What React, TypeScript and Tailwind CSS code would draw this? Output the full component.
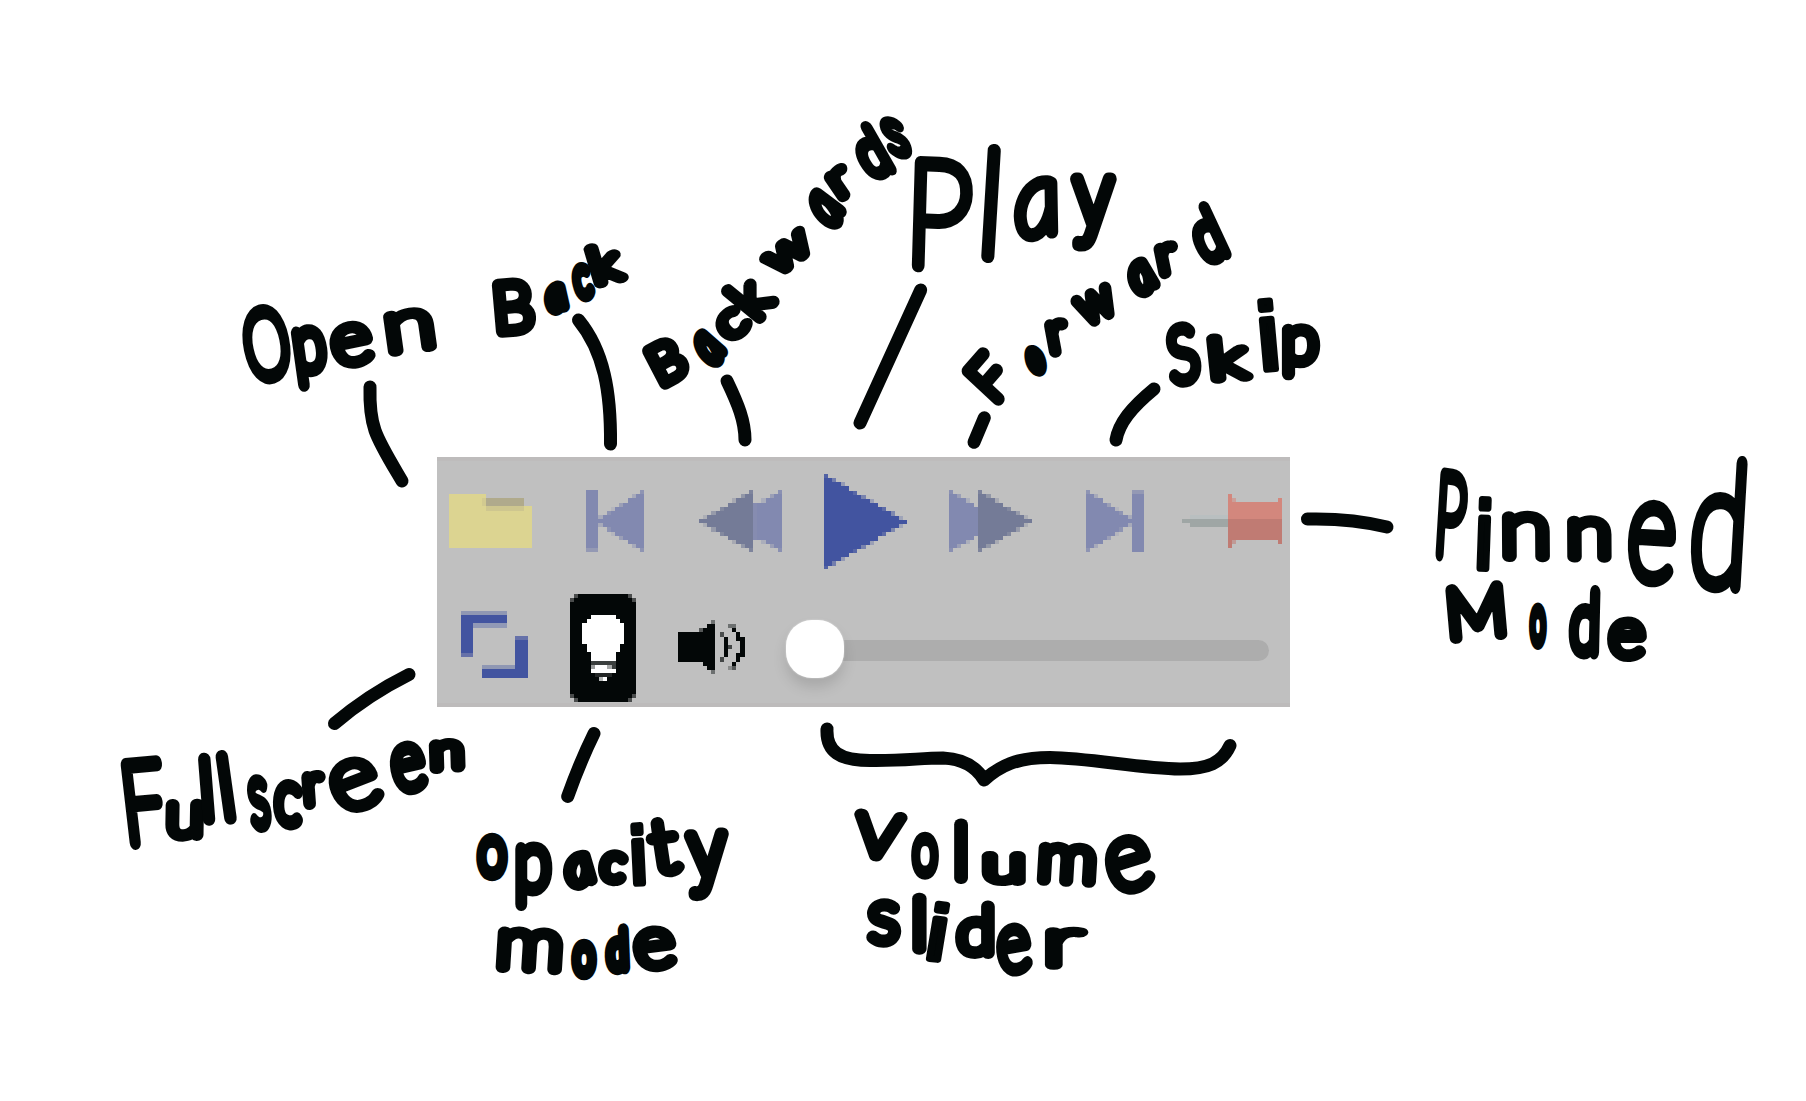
import React from "react";

/* ---------- pixel icons ---------- */

const U = 12.5 / 3; // one icon pixel on the page

type Cell = [x: number, y: number, w: number, h: number, fill: string];

function PixelIcon({ w, h, cells, label }: { w: number; h: number; cells: Cell[]; label: string }) {
  return (
    <svg
      role="img"
      aria-label={label}
      className="block shrink-0"
      width={w * U}
      height={h * U}
      viewBox={`0 0 ${w} ${h}`}
      shapeRendering="crispEdges"
    >
      {cells.map(([x, y, cw, ch, fill], i) => (
        <rect key={i} x={x} y={y} width={cw} height={ch} fill={fill} />
      ))}
    </svg>
  );
}

function mix(fill: string, amount: number) {
  const base = 192;
  const part = (i: number) => {
    const v = parseInt(fill.slice(i, i + 2), 16);
    return Math.round(base + (v - base) * amount);
  };
  return `rgb(${part(1)} ${part(3)} ${part(5)})`;
}

/** A stair-stepped triangle with its tip at x = tip and its flat side at x = base. */
function triangle(tip: number, base: number, top: number, bottom: number, fill: string): Cell[] {
  const cells: Cell[] = [];
  const mid = (top + bottom) / 2;
  const half = (bottom - top) / 2;
  const dir = base > tip ? 1 : -1;
  const len = Math.abs(base - tip);
  for (let y = top; y < bottom; y++) {
    const d = Math.abs(y + 0.5 - mid) / half;
    const edge = d * len;
    const whole = Math.ceil(edge);
    const frac = whole - edge;
    const x = dir === 1 ? tip + whole : base;
    if (len - whole > 0) cells.push([x, y, len - whole, 1, fill]);
    if (frac > 0.1) {
      const px = dir === 1 ? tip + whole - 1 : tip - whole;
      cells.push([px, y, 1, 1, mix(fill, frac)]);
    }
  }
  return cells;
}

const BLUE = "#4254a0";
const SOFT = "#8289b0";
const SLATE = "#747b97";
const INK = "#030707";

const folder: Cell[] = [
  [0, 0, 9, 13, "#dcd491"],
  [9, 3, 11, 10, "#dcd491"],
  [9, 1, 9, 2, "#b0aa8c"],
  [8, 1, 1, 2, "#d2ca90"],
  [9, 3, 9, 1, "#cec68f"],
];
const back: Cell[] = [[0, 0, 3, 15, SOFT], [0, 14, 3, 1, "#9499b4"], ...triangle(2, 14, 0, 15, SOFT)];
const rewind: Cell[] = [...triangle(7, 20, 0, 15, SOFT), ...triangle(0, 13, 0, 15, SLATE), [13, 3, 1, 9, "#868cb0"]];
const play = triangle(20, 0, 0, 23, BLUE);
const forward: Cell[] = [...triangle(13, 0, 0, 15, SOFT), ...triangle(20, 7, 0, 15, SLATE)];
const skip: Cell[] = [...triangle(12, 0, 0, 15, SOFT), [11, 0, 3, 15, SOFT], [11, 0, 3, 1, "#9499b4"]];
const pin: Cell[] = [
  [2, 5, 9, 1, "#b9bfc0"],
  [0, 6, 11, 1, "#9fa6a5"],
  [2, 7, 9, 1, "#9fa6a5"],
  [11, 0, 1, 6, "#d3877d"],
  [12, 1, 1, 5, "#d3877d"],
  [12, 1, 1, 1, "#cb9f99"],
  [13, 2, 10, 4, "#d3877d"],
  [23, 1, 1, 5, "#d3877d"],
  [11, 6, 1, 7, "#c07b73"],
  [12, 6, 1, 6, "#c07b73"],
  [12, 11, 1, 1, "#c09a96"],
  [13, 6, 10, 5, "#c07b73"],
  [23, 6, 1, 6, "#c07b73"],
];
const fullscreen: Cell[] = [
  [0, 0, 11, 1, "#8f97b3"],
  [0, 1, 11, 2, BLUE],
  [3, 3, 8, 1, "#9199b6"],
  [0, 1, 3, 9, BLUE],
  [0, 10, 3, 1, "#6671a9"],
  [13, 6, 3, 1, "#6671a9"],
  [13, 7, 3, 9, BLUE],
  [5, 13, 8, 1, "#8f97b3"],
  [5, 14, 11, 2, BLUE],
];
const bulb: Cell[] = [
  [1, 0, 14, 26, INK],
  [0, 1, 16, 24, INK],
  [1, 0, 1, 1, "#4a4c4c"],
  [14, 0, 1, 1, "#4a4c4c"],
  [0, 1, 1, 1, "#4a4c4c"],
  [15, 1, 1, 1, "#4a4c4c"],
  [0, 24, 1, 1, "#4a4c4c"],
  [15, 24, 1, 1, "#4a4c4c"],
  [1, 25, 1, 1, "#4a4c4c"],
  [14, 25, 1, 1, "#4a4c4c"],
  [5, 5, 6, 1, "#ffffff"],
  [4, 6, 8, 1, "#ffffff"],
  [3, 7, 10, 5, "#ffffff"],
  [4, 12, 8, 2, "#ffffff"],
  [5, 14, 6, 2, "#ffffff"],
  [5, 16, 6, 1, "#3b3f3e"],
  [5, 17, 6, 1, "#ffffff"],
  [5, 17, 1, 1, "#9a9c9c"],
  [9, 17, 1, 1, "#a8aaaa"],
  [10, 17, 1, 1, "#3b3f3e"],
  [5, 18, 6, 1, "#ffffff"],
  [6, 19, 4, 1, "#232626"],
  [7, 20, 1, 1, "#b4b6b6"],
  [8, 20, 1, 1, "#ffffff"],
];
const speaker: Cell[] = [
  [0, 3, 9, 7, INK],
  [5, 2, 1, 1, "#555858"],
  [6, 2, 3, 9, INK],
  [7, 1, 2, 11, INK],
  [8, 0, 1, 1, "#6d7070"],
  [8, 12, 1, 1, "#6d7070"],
  [10, 3, 1, 1, "#4a4d4d"],
  [11, 4, 1, 5, INK],
  [12, 6, 1, 1, "#444747"],
  [10, 9, 1, 1, "#444747"],
  [12, 1, 2, 1, "#6d7070"],
  [13, 2, 1, 1, INK],
  [14, 3, 1, 2, INK],
  [15, 4, 1, 5, INK],
  [14, 8, 1, 2, INK],
  [13, 10, 1, 1, INK],
  [12, 11, 1, 1, "#8a8c8c"],
  [13, 11, 1, 1, "#555858"],
];

function ControlPanel() {
  return (
    <div className="flex h-[250px] w-[853px] flex-col border-y-4 border-t-[#bebcbc] border-b-[#bdbbbb] bg-[#c0c0c0]">
      <div className="flex h-[121px] items-center pl-[12px]">
        <PixelIcon label="Open" w={20} h={13} cells={folder} />
        <div className="ml-[54px]"><PixelIcon label="Back" w={14} h={15} cells={back} /></div>
        <div className="ml-[54px]"><PixelIcon label="Backwards" w={20} h={15} cells={rewind} /></div>
        <div className="ml-[42px]"><PixelIcon label="Play" w={20} h={23} cells={play} /></div>
        <div className="ml-[42px]"><PixelIcon label="Forward" w={20} h={15} cells={forward} /></div>
        <div className="ml-[53px]"><PixelIcon label="Skip" w={14} h={15} cells={skip} /></div>
        <div className="ml-[38px]"><PixelIcon label="Pinned mode" w={24} h={13} cells={pin} /></div>
      </div>
      <div className="flex h-[121px] items-center pl-[24px]">
        <div className="mt-[4px]"><PixelIcon label="Fullscreen" w={16} h={16} cells={fullscreen} /></div>
        <div className="mt-[12px] ml-[42px]"><PixelIcon label="Opacity mode" w={16} h={26} cells={bulb} /></div>
        <div className="mt-[9px] ml-[42px]"><PixelIcon label="Volume" w={16} h={13} cells={speaker} /></div>
        <div className="mt-[16px] ml-[41px] flex items-center">
          <div className="z-10 -mt-[4px] h-[58px] w-[58px] rounded-[26px] bg-white shadow-[0_0_2px_rgba(255,255,255,0.6),0_9px_14px_rgba(0,0,0,0.13)]" />
          <div className="-ml-[30px] h-[21px] w-[455px] rounded-full bg-[#adadad]" />
        </div>
      </div>
    </div>
  );
}

/* ---------- handwritten notes ---------- */

/** character, centre x, centre y, width, height, tilt */
type Letter = [ch: string, cx: number, cy: number, w: number, h: number, tilt: number];
type Word = { tilt: number; letters: Letter[] };

const words: Word[] = [
  { tilt: -8, letters: [["O", 265.5, 345.5, 38, 68, -14], ["p", 311, 357.5, 24, 53, -8], ["e", 352, 345, 33, 37, -12], ["n", 410, 331, 38, 36, -8]] },
  { tilt: -10, letters: [["B", 514.5, 307, 30, 47, -5], ["a", 556, 298.5, 15, 21, -20], ["c", 582.5, 283, 13, 27, -15], ["k", 606.5, 262.5, 23, 36, -15]] },
  { tilt: -38, letters: [["B", 667.5, 361.7, 25, 37, -28], ["a", 709, 350, 17, 27, -58], ["c", 733, 324, 22, 24, -40], ["k", 750, 295.7, 22, 43, -50], ["w", 788.5, 253, 42, 22, -38], ["a", 826, 211, 19, 31, -64], ["r", 841.7, 182.7, 14, 24, -35], ["d", 870, 151, 20, 50, -27], ["s", 896.5, 134.5, 14, 36, -10]] },
  { tilt: 0, letters: [["P", 942.7, 214.7, 49, 103, 2], ["l", 991.7, 202.5, 0, 108, 4], ["a", 1037, 209, 38, 53, -8], ["y", 1093.5, 212.5, 36, 67, 0]] },
  { tilt: -25, letters: [["F", 990.7, 375.5, 24, 42, -48], ["o", 1036, 359.5, 11, 19, 0], ["r", 1058, 337.5, 13, 27, -10], ["w", 1096, 305.6, 32, 25, -25], ["a", 1142, 278, 20, 27, -38], ["r", 1167.6, 260, 13, 25, -12], ["d", 1206, 235, 21, 52, -25]] },
  { tilt: -3, letters: [["S", 1181.7, 355, 24, 54, -10], ["k", 1230, 357, 30, 41, -5], ["i", 1268, 334.7, 0, 63, -5], ["p", 1300.7, 351.5, 27, 46, 0]] },
  { tilt: 2, letters: [["P", 1453, 515, 22, 79, 5], ["i", 1484, 533.6, 0, 63, 2], ["n", 1526, 536, 42, 40, 0], ["n", 1589.5, 538.5, 36, 36, 0], ["e", 1651.7, 544, 40, 74, 3], ["d", 1718, 523, 44, 128, 4]] },
  { tilt: 0, letters: [["M", 1477, 610.7, 50, 48, -5], ["o", 1538, 626.6, 9, 32, 0], ["d", 1584, 621.6, 22, 62, 2], ["e", 1626.7, 640, 30, 35, 0]] },
  { tilt: -8, letters: [["F", 146, 802, 32, 78, -6], ["u", 184, 821, 26, 32, 0], ["l", 207, 788.7, 0, 61, -4], ["l", 226.5, 786.7, 0, 63, -8], ["s", 259.5, 803.5, 15, 45, -7], ["c", 288.7, 804, 21, 38, 5], ["r", 314, 790, 13, 27, -4], ["e", 356, 784, 40, 46, -22], ["e", 408.5, 768.5, 27, 42, -12], ["n", 446.7, 756, 26, 24, -3]] },
  { tilt: 0, letters: [["O", 492, 857.5, 22, 35, 0], ["p", 533.5, 875.6, 27, 57, 0], ["a", 580, 870, 23, 27, -22], ["c", 613, 868, 19, 25, 8], ["i", 638, 854, 0, 52, -3], ["t", 665, 846.6, 22, 51, -8], ["y", 707.7, 864.5, 34, 60, -3]] },
  { tilt: 0, letters: [["m", 529, 951, 54, 36, 3], ["o", 584, 959.5, 17, 28, 0], ["d", 616.7, 949.5, 15, 38, -3], ["e", 655, 948.6, 33, 36, -8]] },
  { tilt: 0, letters: [["V", 878.5, 836, 41, 40, 6], ["o", 925, 855.6, 19, 36, 0], ["l", 961.5, 850, 0, 55, 0], ["u", 1003.5, 869, 35, 26, 0], ["m", 1066.7, 864.5, 47, 33, 3], ["e", 1128, 866, 37, 49, -16]] },
  { tilt: 0, letters: [["s", 884, 923.5, 24, 38, 0], ["l", 919.7, 922.5, 0, 52, 0], ["i", 938, 931.5, 0, 50, 8], ["d", 974.5, 930, 28, 48, 0], ["e", 1013, 951, 27, 42, -8], ["r", 1066, 948, 38, 34, 0]] },
];

const connectors = [
  "M370 387C369 428 376 437 402 481",
  "M578.5 320C604 351 611 392 610.5 444",
  "M727 381C738 404 745 421 745 440",
  "M920.7 290L860 423",
  "M984.3 417.7L974 442.3",
  "M1154 389C1131 408 1119 423 1116 440",
  "M1307.5 519Q1351 518 1387 527",
  "M409 674.5Q368 695 334.5 723.5",
  "M594 733.5Q580 762 567.7 796.5",
  "M827 729C826 752 840 760.5 870 760.5C905 761 920 758 943 758C965 759 977 768 984 780C1000 766 1016 757.5 1050 757.5C1090 758 1140 768.5 1180 769C1208 769 1222 763 1230 745.5",
];

const RAD = Math.PI / 180;
const PEN = 12.5;
const pen = document.createElement("canvas").getContext("2d")!;

const clamp = (v: number, lo: number, hi: number) => Math.min(hi, Math.max(lo, v));

function face(ch: string) {
  if (ch === "i") return { family: "Liberation Sans", weight: 400, italic: false };
  if (ch === "y") return { family: "Roboto", weight: 100, italic: false };
  return { family: "Lato", weight: 100, italic: ch === "a" };
}

function measure(ch: string) {
  const { family, weight, italic } = face(ch);
  pen.font = `${italic ? "italic " : ""}${weight} 1000px "${family}", sans-serif`;
  const m = pen.measureText(ch);
  return {
    advance: m.width / 1000,
    left: -m.actualBoundingBoxLeft / 1000,
    right: m.actualBoundingBoxRight / 1000,
    up: m.actualBoundingBoxAscent / 1000,
    down: m.actualBoundingBoxDescent / 1000,
  };
}

/** How wide a letter is to be drawn, relative to its natural width at that height. */
function widthRatio([ch, , , w, h]: Letter) {
  const g = measure(ch);
  return w / ((g.right - g.left) * (h / (g.up + g.down)));
}

function Note({ word }: { word: Word }) {
  const [, ox, oy] = word.letters[0];
  const cos = Math.cos(word.tilt * RAD);
  const sin = Math.sin(word.tilt * RAD);
  const ratios = word.letters.filter((l) => l[3] > 0).map(widthRatio);
  const squeeze = Math.exp(ratios.reduce((sum, r) => sum + Math.log(r), 0) / ratios.length);
  return (
    <text
      transform={`translate(${ox} ${oy}) rotate(${word.tilt}) scale(${squeeze} 1)`}
      className="[vector-effect:non-scaling-stroke]"
    >
      {word.letters.map((letter, i) => {
        const [ch, cx, cy, w, h, tilt] = letter;
        const g = measure(ch);
        const { family, weight, italic } = face(ch);
        const stretch = w ? clamp(widthRatio(letter) / squeeze, 0.6, 1.45) : 1;
        const size = (ch === "i" ? h + 6 : h) / (g.up + g.down);
        const lx = ((cx - ox) * cos + (cy - oy) * sin) / squeeze;
        const ly = -(cx - ox) * sin + (cy - oy) * cos;
        const turn = tilt - word.tilt;
        const c = Math.cos(turn * RAD);
        const s = Math.sin(turn * RAD);
        const mx = ((g.left + g.right) / 2) * size * stretch;
        const my = ((g.down - g.up) / 2) * size;
        return (
          <tspan
            key={i}
            x={lx - (mx * c - my * s)}
            y={ly - (mx * s + my * c)}
            rotate={turn}
            fontFamily={`"${family}", sans-serif`}
            fontWeight={weight}
            fontSize={size}
            fontStyle={italic ? "italic" : "normal"}
            strokeWidth={ch === "i" ? 7 : clamp(PEN / Math.sqrt(stretch), 10.5, 14)}
            textLength={w ? g.advance * size * stretch : undefined}
            lengthAdjust="spacingAndGlyphs"
            className="[vector-effect:non-scaling-stroke]"
          >
            {ch}
          </tspan>
        );
      })}
    </text>
  );
}

function Annotations() {
  return (
    <svg className="pointer-events-none absolute inset-0" width={1806} height={1101} viewBox="0 0 1806 1101">
      <g fill="none" stroke={INK} strokeWidth={13} strokeLinecap="round" strokeLinejoin="round">
        {connectors.map((d) => (
          <path key={d} d={d} />
        ))}
      </g>
      <g fill={INK} stroke={INK} strokeLinecap="round" strokeLinejoin="round">
        {words.map((word, i) => (
          <Note key={i} word={word} />
        ))}
      </g>
    </svg>
  );
}

export default function App() {
  return (
    <div className="relative h-[1101px] w-[1806px] overflow-hidden bg-white pt-[457px] pl-[437px]">
      <ControlPanel />
      <Annotations />
    </div>
  );
}
